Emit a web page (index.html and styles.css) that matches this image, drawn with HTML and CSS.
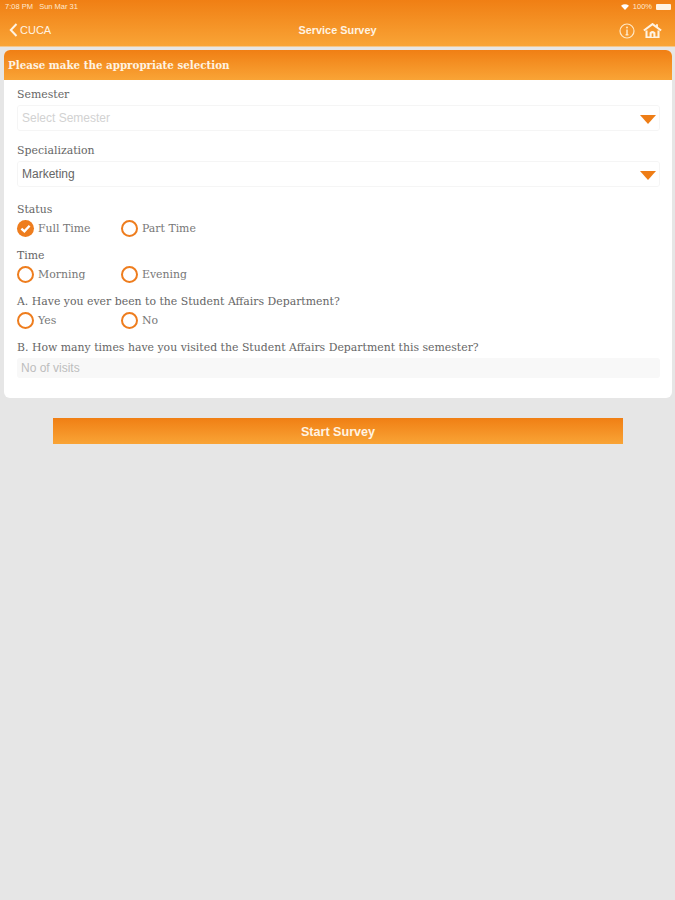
FILE: index.html
```html
<!DOCTYPE html>
<html lang="en">
<head>
<title>Service Survey</title>
<meta charset="utf-8">
<meta name="viewport" content="width=device-width, initial-scale=1">
<link rel="stylesheet" href="styles.css">
</head>
<body>

<header class="topbar">
  <div class="status">
    <span>7:08 PM&nbsp;&nbsp; Sun Mar 31</span>
    <span class="status-right">
      <svg class="wifi" viewBox="0 0 12 9"><path d="M0 2.6 Q6 -1.6 12 2.6 L6 9 Z" fill="#fff"/></svg>
      <span>100%</span>
      <span class="battery"></span>
    </span>
  </div>
  <nav class="nav">
    <a class="back">
      <svg class="chev" viewBox="0 0 9 14"><path d="M7.5 1 L1.8 7 L7.5 13" fill="none" stroke="#FFF3E2" stroke-width="2"/></svg>
      CUCA
    </a>
    <span class="title">Service Survey</span>
    <span class="nav-icons">
      <svg class="info" viewBox="0 0 16 16">
        <circle cx="8" cy="8" r="7" fill="none" stroke="#FFE8C6" stroke-width="1.2"/>
        <circle cx="8" cy="4.6" r="1" fill="#FFE8C6"/>
        <path d="M8 6.6 V11.6 M6.6 11.8 H9.4" fill="none" stroke="#FFE8C6" stroke-width="1.5"/>
      </svg>
      <svg class="home" viewBox="0 0 20 16">
        <path d="M0.8 8 L10 1.2 L19.2 8" fill="none" stroke="#FFF3E2" stroke-width="2.2"/>
        <path d="M14.8 1.4 V5" stroke="#FFF3E2" stroke-width="2"/>
        <path d="M3.6 8 V15.4 H8 V10.6 Q10 8.8 12 10.6 V15.4 H16.4 V8" fill="none" stroke="#FFF3E2" stroke-width="2.2"/>
        <path d="M3 15.4 H17" stroke="#FFF3E2" stroke-width="1.2"/>
      </svg>
    </span>
  </nav>
</header>

<section class="card">
  <h2 class="card-head">Please make the appropriate selection</h2>
  <div class="card-body">
    <label class="lbl">Semester</label>
    <div class="select placeholder">Select Semester<span class="arrow"></span></div>

    <label class="lbl lbl-gap">Specialization</label>
    <div class="select">Marketing<span class="arrow"></span></div>

    <label class="lbl lbl-status">Status</label>
    <div class="radios">
      <span class="radio checked">
        <svg class="tick" viewBox="0 0 17 17"><path d="M4.4 8.6 L7.4 11.4 L12.6 5.8" fill="none" stroke="#fff" stroke-width="2.4"/></svg>
      </span><span class="opt">Full Time</span>
      <span class="radio"></span><span class="opt">Part Time</span>
    </div>

    <label class="lbl lbl-row">Time</label>
    <div class="radios">
      <span class="radio"></span><span class="opt">Morning</span>
      <span class="radio"></span><span class="opt">Evening</span>
    </div>

    <label class="lbl lbl-row">A. Have you ever been to the Student Affairs Department?</label>
    <div class="radios">
      <span class="radio"></span><span class="opt">Yes</span>
      <span class="radio"></span><span class="opt">No</span>
    </div>

    <label class="lbl lbl-row">B. How many times have you visited the Student Affairs Department this semester?</label>
    <div class="visits">No of visits</div>
  </div>
</section>

<button class="start" type="button">Start Survey</button>

</body>
</html>
```
FILE: styles.css
```css
* {
  box-sizing: border-box;
}

body {
  margin: 0;
  height: 900px;
  overflow: hidden;
  background-color: #E6E6E6;
  font-family: "Liberation Sans", Arial, sans-serif;
}

/* Top bar */
.topbar {
  height: 47px;
  background: linear-gradient(180deg, #F07F14 0%, #F9A436 100%);
  color: #fff;
  border-bottom: 1px solid #F4C78C;
}

.status {
  display: flex;
  justify-content: space-between;
  align-items: center;
  height: 13px;
  padding: 0 4px 0 5px;
  font-size: 7.5px;
  color: #FFE9CF;
}

.status-right {
  display: flex;
  align-items: center;
  gap: 4px;
}

.wifi {
  width: 8px;
  height: 6px;
}

.battery {
  width: 15px;
  height: 6px;
  border-radius: 1px;
  background-color: #FFF3E2;
}

.nav {
  display: flex;
  align-items: center;
  justify-content: space-between;
  height: 33px;
  padding: 0 13px 0 9px;
  position: relative;
}

.back {
  display: flex;
  align-items: center;
  gap: 2px;
  font-size: 11px;
  color: #FFF3E2;
}

.chev {
  width: 9px;
  height: 14px;
}

.title {
  position: absolute;
  left: 0;
  right: 0;
  text-align: center;
  font-size: 10.9px;
  font-weight: bold;
  color: #FFF3E2;
}

.nav-icons {
  display: flex;
  align-items: center;
  gap: 8px;
  padding-top: 2px;
}

.info {
  width: 16px;
  height: 16px;
}

.home {
  width: 19px;
  height: 15px;
}

/* Card */
.card {
  margin: 3px 3px 0 4px;
  height: 348px;
  background-color: #fff;
  border-radius: 6px;
  overflow: hidden;
}

.card-head {
  margin: 0;
  height: 30px;
  padding: 0 4px;
  line-height: 31px;
  background: linear-gradient(180deg, #F07F14 0%, #F9A436 100%);
  color: #FFF3E2;
  font-family: "DejaVu Serif", serif;
  font-size: 10.3px;
  font-weight: bold;
}

.card-body {
  padding: 8px 12px 0 13px;
}

.lbl {
  display: block;
  height: 13px;
  line-height: 13px;
  font-family: "DejaVu Serif", serif;
  font-size: 10.9px;
  color: #666;
}

.lbl-gap {
  margin-top: 13px;
}

.lbl-status {
  margin-top: 16px;
}

.lbl-row {
  margin-top: 12px;
}

/* Inputs */
.select {
  position: relative;
  margin-top: 4px;
  height: 26px;
  line-height: 25px;
  padding-left: 4px;
  border: 1px solid #F5F5F5;
  border-radius: 3px;
  font-size: 12px;
  color: #666;
}

.placeholder {
  color: #D2D2D2;
}

.arrow {
  position: absolute;
  right: 3px;
  top: 9px;
  width: 0;
  height: 0;
  border-left: 8px solid transparent;
  border-right: 8px solid transparent;
  border-top: 9px solid #EE7D16;
}

.visits {
  margin-top: 4px;
  height: 20px;
  line-height: 20px;
  padding-left: 4px;
  background-color: #F8F8F8;
  border-radius: 3px;
  font-size: 12px;
  color: #BDBDBD;
}

/* Radios */
.radios {
  display: flex;
  align-items: center;
  margin-top: 4px;
  height: 17px;
}

.radio {
  flex: none;
  width: 17px;
  height: 17px;
  border: 2px solid #EE7D1E;
  border-radius: 50%;
}

.radio.checked {
  background-color: #EE7D1E;
  border: none;
}

.tick {
  display: block;
  width: 17px;
  height: 17px;
}

.opt {
  width: 87px;
  padding-left: 4px;
  font-family: "DejaVu Serif", serif;
  font-size: 10.9px;
  color: #777;
}

/* Start button */
.start {
  display: block;
  margin: 20px 0 0 53px;
  width: 570px;
  height: 26px;
  border: none;
  padding: 1px 0 0;
  background: linear-gradient(180deg, #F07F14 0%, #F9A436 100%);
  color: #FFF3E2;
  font-family: "Liberation Sans", Arial, sans-serif;
  font-size: 12.6px;
  font-weight: bold;
}
```
